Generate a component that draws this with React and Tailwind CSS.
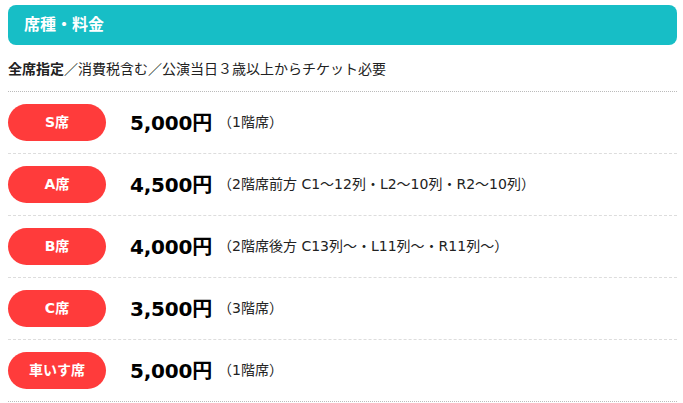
const rows = [
  { seat: "S席", price: "5,000円", note: "（1階席）" },
  { seat: "A席", price: "4,500円", note: "（2階席前方 C1〜12列・L2〜10列・R2〜10列）" },
  { seat: "B席", price: "4,000円", note: "（2階席後方 C13列〜・L11列〜・R11列〜）" },
  { seat: "C席", price: "3,500円", note: "（3階席）" },
  { seat: "車いす席", price: "5,000円", note: "（1階席）" },
];

export default function App() {
  return (
    <div
      className="min-h-screen bg-white pl-2 pr-[6px] pt-[5px] text-[#222]"
      style={{ fontFamily: '"DejaVu Sans", "Noto Sans CJK JP", sans-serif' }}
    >
      <div className="h-10 rounded-lg bg-[#17bec6] px-4 flex items-center">
        <h2 className="text-[16px] font-bold text-white">席種・料金</h2>
      </div>

      <p className="pt-[13px] pb-[11px] text-[14px] leading-[22px]">
        <span className="font-bold">全席指定</span>／消費税含む／公演当日３歳以上からチケット必要
      </p>

      <div className="border-t border-dotted border-[#bbb]">
        {rows.map((r, i) => (
          <div
            key={r.seat}
            className={`flex items-center py-3 border-b ${
              i === rows.length - 1 ? "border-dotted border-[#bbb]" : "border-dashed border-[#ddd]"
            }`}
          >
            <div className="w-[98px] h-[37px] rounded-full bg-[#ff3b3b] text-white font-bold text-[14px] flex items-center justify-center">
              {r.seat}
            </div>
            <div className="ml-6 text-[20px] font-bold text-black tracking-[-0.2px]">{r.price}</div>
            <div className="ml-1.5 text-[14px] text-[#222]">{r.note}</div>
          </div>
        ))}
      </div>
    </div>
  );
}
